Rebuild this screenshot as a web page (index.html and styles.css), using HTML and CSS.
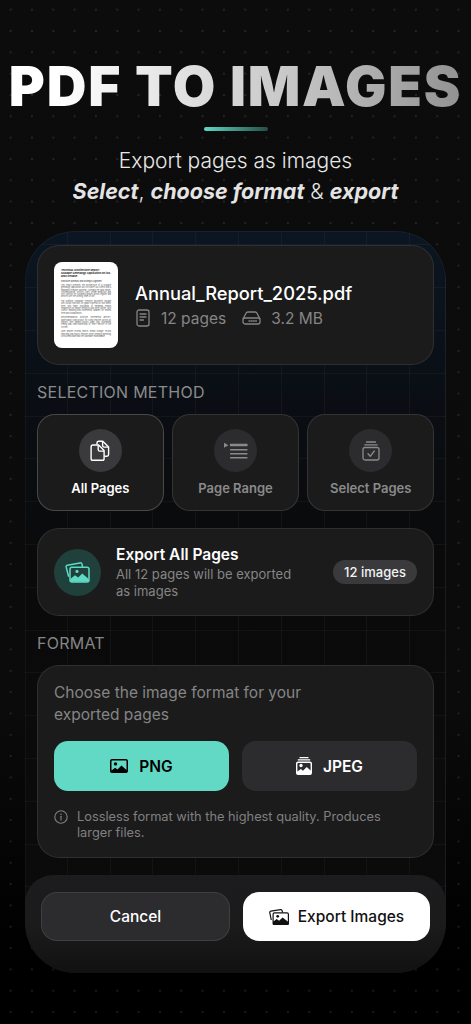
FILE: index.html
```html
<!DOCTYPE html>
<html lang="en">
<head>
<meta charset="utf-8">
<title>PDF to Images</title>
<link rel="stylesheet" href="styles.css">
</head>
<body>
<main class="screen">
  <header class="hero">
    <h1 class="title">PDF TO IMAGES</h1>
    <div class="rule"></div>
    <p class="sub">Export pages as images</p>
    <p class="sub2"><b>Select</b>, <b>choose format</b> &amp; <b>export</b></p>
  </header>

  <section class="phone">
    <div class="card file">
      <div class="thumb">
        <div class="thumb-h">Technical Architecture Report: Scalable Genealogy Application on iOS and Firebase</div>
        <div class="thumb-s">Executive Summary and Strategic Alignment</div>
        <p>This report presents the architecture of a scalable genealogy application built on native iOS clients and a managed Firebase backend, covering the data model, synchronization, security rules, offline behaviour and cost controls for sustained growth across regions and devices over the coming years of use.</p>
        <p>The platform combines Firestore document storage with Cloud Functions for graph traversal so that family trees with many thousands of members remain responsive on mobile networks and while offline, with conflict handling and incremental updates for shared trees and collaborators.</p>
        <p>Recommendations prioritize incremental delivery, observability and privacy for living relatives across all regions, with staged rollouts, audit logs, automated testing and clear ownership of every service in the system.</p>
        <p>Later phases extend search, media storage, record matching and export features while keeping operating costs predictable and the codebase maintainable.</p>
      </div>
      <div class="file-info">
        <div class="file-name">Annual_Report_2025.pdf</div>
        <div class="meta">
          <svg class="meta-doc" viewBox="0 0 14 18" fill="none" stroke="currentColor" stroke-width="1.300"><rect x="1" y="1" width="12" height="16" rx="2"/><path d="M4 5h6M4 8h6M4 11h3.500" stroke-linecap="round"/></svg>
          <span class="meta-pages">12 pages</span>
          <svg class="meta-disk" viewBox="0 0 19 14" fill="none" stroke="currentColor" stroke-width="1.300"><path d="M1 8 4 2.200C4.400 1.400 5 1 5.800 1h7.400c.8 0 1.400.4 1.800 1.200L18 8"/><rect x="1" y="7" width="17" height="6" rx="2"/><path d="M7 10h.9M9.200 10h.9M11.400 10h.9M13.600 10h.9" stroke-linecap="round"/></svg>
          <span>3.2 MB</span>
        </div>
      </div>
    </div>

    <h2 class="label label-sel">SELECTION METHOD</h2>
    <div class="tiles">
      <div class="tile active">
        <span class="tile-icon">
          <svg viewBox="0 0 20 22" width="20" height="22" fill="none" stroke="currentColor" stroke-width="1.400" stroke-linejoin="round"><path d="M7 4.500V3c0-1 .7-1.700 1.700-1.700h4.100L18.600 7v7.600c0 1-.7 1.700-1.700 1.700h-2.400"/><path d="M12.600 1.500V5.500c0 1 .6 1.600 1.600 1.600h4.200"/><path d="M3 5h5.600l5.500 5.600v7.800c0 1.100-.8 1.900-1.900 1.900H3c-1.100 0-1.900-.8-1.900-1.900V6.900C1.100 5.800 1.900 5 3 5Z"/><path d="M8.200 5.200V9.500c0 1 .7 1.600 1.600 1.600h4.200"/></svg>
        </span>
        <span class="tile-text">All Pages</span>
      </div>
      <div class="tile">
        <span class="tile-icon">
          <svg viewBox="0 0 24 18" width="24" height="18" fill="currentColor"><path d="M0 .8 4.400 3.300 0 5.800Z"/><rect x="6" y="1.700" width="17.500" height="2.600" rx=".5"/><rect x="6" y="7" width="17.500" height="1.600" rx=".5"/><rect x="6" y="11" width="17.500" height="1.600" rx=".5"/><rect x="6" y="15" width="17.500" height="1.600" rx=".5"/></svg>
        </span>
        <span class="tile-text">Page Range</span>
      </div>
      <div class="tile">
        <span class="tile-icon">
          <svg viewBox="0 0 18 20" width="18" height="20" fill="none" stroke="currentColor" stroke-width="1.300"><path d="M4.500 1h9M2.800 3.800h12.400" stroke-linecap="round"/><rect x="1" y="6.500" width="16" height="12.500" rx="2"/><path d="m6 12.800 2.300 2.500 4-5.300" stroke-linecap="round" stroke-linejoin="round"/></svg>
        </span>
        <span class="tile-text">Select Pages</span>
      </div>
    </div>

    <div class="card export">
      <span class="export-icon">
        <svg viewBox="0 0 25 21" width="25" height="21" fill="none" stroke="currentColor" stroke-width="1.500" stroke-linejoin="round"><path d="M3.700 14.800 1.200 5.200c-.2-.9.300-1.800 1.200-2L14.900.9c1-.2 1.900.3 2.100 1.200l.6 2.700"/><rect x="5" y="5.200" width="19" height="14.800" rx="2"/><circle cx="12" cy="9.400" r="1.600" fill="currentColor" stroke="none"/><path d="M5.500 19.800v-3l4.500-3.600 3.200 2.400 4-4 6.300 5.200v3Z" fill="currentColor" stroke="none"/></svg>
      </span>
      <div class="export-text">
        <div class="export-title">Export All Pages</div>
        <div class="export-sub">All 12 pages will be exported as images</div>
      </div>
      <span class="badge">12 images</span>
    </div>

    <h2 class="label label-fmt">FORMAT</h2>
    <div class="card format">
      <p class="format-lead">Choose the image format for your exported pages</p>
      <div class="format-btns">
        <div class="fbtn png">
          <svg viewBox="0 0 18 14" width="18" height="14"><path fill-rule="evenodd" d="M2 0h14c1.100 0 2 .9 2 2v10c0 1.100-.9 2-2 2H2c-1.100 0-2-.9-2-2V2C0 .9.900 0 2 0Zm3.500 3.200a1.700 1.700 0 1 0 0 3.400 1.700 1.700 0 0 0 0-3.400ZM1.500 11.500l3.700-2.700 2.300 1.700 4-3.900 5 4.300V2c0-.3-.2-.5-.5-.5H2c-.3 0-.5.200-.5.500Z" fill="currentColor"/></svg>
          <span>PNG</span>
        </div>
        <div class="fbtn jpeg">
          <svg viewBox="0 0 16 18" width="16" height="18" fill="currentColor"><path d="M3.500 0h9v1.200h-9ZM1.800 2.300h12.400v1.200H1.800Z"/><path fill-rule="evenodd" d="M2 4.600h12c1.100 0 2 .9 2 2V16c0 1.100-.9 2-2 2H2c-1.100 0-2-.9-2-2V6.600c0-1.100.9-2 2-2Zm3 2.200a1.700 1.700 0 1 0 0 3.400 1.700 1.700 0 0 0 0-3.400Zm-3.600 7.600 3.400-2.300 2.200 1.600 3.700-3.700 3.900 3.400V6.900c0-.5-.3-.9-.9-.9H2.300c-.5 0-.9.400-.9.900Z"/></svg>
          <span>JPEG</span>
        </div>
      </div>
      <div class="note">
        <svg class="note-icon" viewBox="0 0 14 14" fill="none" stroke="currentColor" stroke-width="1.100"><circle cx="7" cy="7" r="6.200"/><path d="M7 6.300v3.800" stroke-linecap="round"/><circle cx="7" cy="4.200" r=".8" fill="currentColor" stroke="none"/></svg>
        <p>Lossless format with the highest quality. Produces larger files.</p>
      </div>
    </div>

    <div class="actions">
      <div class="abtn cancel">Cancel</div>
      <div class="abtn go">
        <svg viewBox="0 0 20 16" width="20" height="16" fill="none" stroke="currentColor" stroke-width="1.200"><path d="M2.300 11 .8 3.900c-.2-.8.300-1.500 1-1.700L11.500.7c.8-.1 1.500.3 1.700 1.100l.3 1.500"/><path d="M5.500 3.800h12.500c.8 0 1.400.6 1.400 1.400v9c0 .8-.6 1.400-1.400 1.400H5.500c-.8 0-1.400-.6-1.400-1.400v-9c0-.8.600-1.400 1.400-1.400Z"/><circle cx="8.700" cy="7.300" r="1.400" fill="currentColor" stroke="none"/><path d="M4 15.600v-2.900l3.700-2.600 2.400 1.700 3.500-3.400 5.800 4.600v2.600Z" fill="currentColor" stroke="none"/></svg>
        <span>Export Images</span>
      </div>
    </div>
  </section>
</main>
</body>
</html>
```
FILE: styles.css
```css
* { box-sizing: border-box; }
html, body { margin: 0; padding: 0; background: #000; }
body { font-family: Inter, "Noto Sans", sans-serif; color: #fff; }
h1, h2, p { margin: 0; font-weight: inherit; }

.screen {
  width: 471px;
  height: 1024px;
  overflow: hidden;
  background:
    radial-gradient(circle at center, rgba(255,255,255,.1) .7px, transparent 1px) 0 -1px / 21.33px 21.33px,
    linear-gradient(#0c0c0c 0, #0b0b0b 700px, #000 960px);
}

.hero { padding-top: 57px; text-align: center; height: 231px; }
.title {
  font-size: 55px;
  line-height: 59px;
  font-weight: 900;
  letter-spacing: 1.800px;
  white-space: nowrap;
  background: linear-gradient(90deg, #fff 0, #fff 12%, #c9c9c9 60%, #8f8f8f 100%);
  -webkit-background-clip: text;
  background-clip: text;
  color: transparent;
}
.rule {
  width: 64px;
  height: 4px;
  margin: 11px auto 0;
  border-radius: 2px;
  background: linear-gradient(90deg, #5fd8c4, #264e47);
}
.sub { margin-top: 17px; font-size: 21px; line-height: 26px; font-weight: 300; color: #e8e8e8; }
.sub2 { margin-top: 3px; font-size: 21.500px; line-height: 28px; font-weight: 300; color: #e4e4e4; }
.sub2 b { font-weight: 700; font-style: italic; }

.phone {
  margin: 0 25px;
  width: 421px;
  height: 742px;
  padding: 14px 12px 0;
  border-radius: 50px;
  box-shadow: inset 0 1px 0 rgba(255,255,255,.05), inset 1px 0 0 rgba(255,255,255,.04), inset -1px 0 0 rgba(255,255,255,.04);
  overflow: hidden;
  background:
    repeating-linear-gradient(90deg, rgba(255,255,255,.035) 0 1px, transparent 1px 42.800px) -1px 0,
    repeating-linear-gradient(0deg, rgba(255,255,255,.035) 0 1px, transparent 1px 42.800px),
    linear-gradient(#0b1622 0, #0a0e14 170px, #0a0a0a 330px, #0b0b0b 100%);
}

.card {
  background: #1b1b1c;
  border: 1px solid rgba(255,255,255,.09);
  border-radius: 22px;
}

.file { display: flex; align-items: center; height: 120px; padding-left: 16px; }
.thumb {
  flex: none;
  width: 64px;
  height: 86px;
  padding: 7px 7px 0;
  overflow: hidden;
  background: #fff;
  border-radius: 8px;
  color: #555;
  font-size: 1.900px;
  line-height: 2.300px;
}
.thumb-h { font-weight: 700; font-size: 2.600px; line-height: 3.200px; color: #111; margin-bottom: 1.500px; }
.thumb-s { font-weight: 600; margin-bottom: 1.500px; }
.thumb p { margin-bottom: 2.500px; text-align: justify; }
.file-info { margin-left: 17px; }
.file-name { font-size: 18.300px; line-height: 24px; font-weight: 500; margin-top: 1px; }
.meta { display: flex; align-items: center; margin-top: 1px; height: 24px; font-size: 15.500px; color: #858585; }
.meta-doc { width: 14px; height: 18px; margin-left: 1px; }
.meta-pages { margin-left: 11px; }
.meta-disk { width: 19px; height: 14px; margin: 0 10px 0 16px; }

.label { font-size: 16px; line-height: 20px; font-weight: 400; letter-spacing: .25px; color: #8b8b8b; }
.label-sel { margin-top: 17px; height: 32px; }
.label-fmt { margin-top: 17px; height: 32px; color: #858585; }

.tiles { display: flex; gap: 8.500px; }
.tile {
  flex: 1;
  height: 97px;
  padding-top: 14px;
  display: flex;
  flex-direction: column;
  align-items: center;
  background: #1b1b1c;
  border: 1px solid rgba(255,255,255,.11);
  border-radius: 18px;
  color: #8a8a8a;
}
.tile.active { color: #fff; border-color: rgba(255,255,255,.2); }
.tile-icon {
  width: 43px;
  height: 43px;
  border-radius: 50%;
  background: #2c2c2e;
  display: flex;
  align-items: center;
  justify-content: center;
}
.active .tile-icon { background: #3a3a3c; }
.tile-text { margin-top: 8px; font-size: 13px; line-height: 16px; font-weight: 600; }

.export {
  margin-top: 17px;
  height: 88px;
  display: flex;
  align-items: center;
  padding: 0 16px;
}
.export-icon {
  flex: none;
  width: 47px;
  height: 47px;
  border-radius: 50%;
  background: #20403c;
  color: #5fd8c4;
  display: flex;
  align-items: center;
  justify-content: center;
}
.export-text { margin-left: 15px; width: 190px; }
.export-title { font-size: 15.500px; line-height: 20px; font-weight: 600; }
.export-sub { margin-top: 1px; font-size: 13px; line-height: 17px; color: #858585; }
.badge {
  margin-left: auto;
  height: 24px;
  width: 84px;
  text-align: center;
  border-radius: 12px;
  background: #3a3a3c;
  font-size: 13px;
  line-height: 24px;
  font-weight: 500;
  color: #f2f2f2;
}

.format { height: 193px; padding: 16px 16px 0; }
.format-lead { width: 290px; font-size: 15.500px; line-height: 22px; color: #858585; }
.format-btns { display: flex; gap: 13px; margin-top: 15px; }
.fbtn {
  flex: 1;
  height: 50px;
  border-radius: 14px;
  display: flex;
  align-items: center;
  justify-content: center;
  gap: 11px;
  font-size: 15.500px;
  font-weight: 600;
}
.png { background: #62d9c5; color: #000; }
.jpeg { background: #2c2c2e; color: #fff; }
.note { display: flex; gap: 9px; margin-top: 18px; color: #808080; }
.note-icon { flex: none; width: 14px; height: 14px; margin-top: 1px; }
.note p { font-size: 12.800px; line-height: 16px; }

.actions {
  margin: 17px -12px 0;
  height: 98px;
  padding: 17px 16px 0;
  display: flex;
  gap: 13px;
  align-items: flex-start;
  border-radius: 28px 28px 50px 50px;
  background: linear-gradient(#1c1c1e 0, #1b1b1c 50%, #111 100%);
}
.abtn {
  flex: 1;
  height: 49px;
  border-radius: 16px;
  display: flex;
  align-items: center;
  justify-content: center;
  font-size: 15.500px;
  font-weight: 500;
}
.cancel { background: #2c2c2e; border: 1px solid rgba(255,255,255,.09); }
.go { background: #fff; color: #111; gap: 9px; }
```
